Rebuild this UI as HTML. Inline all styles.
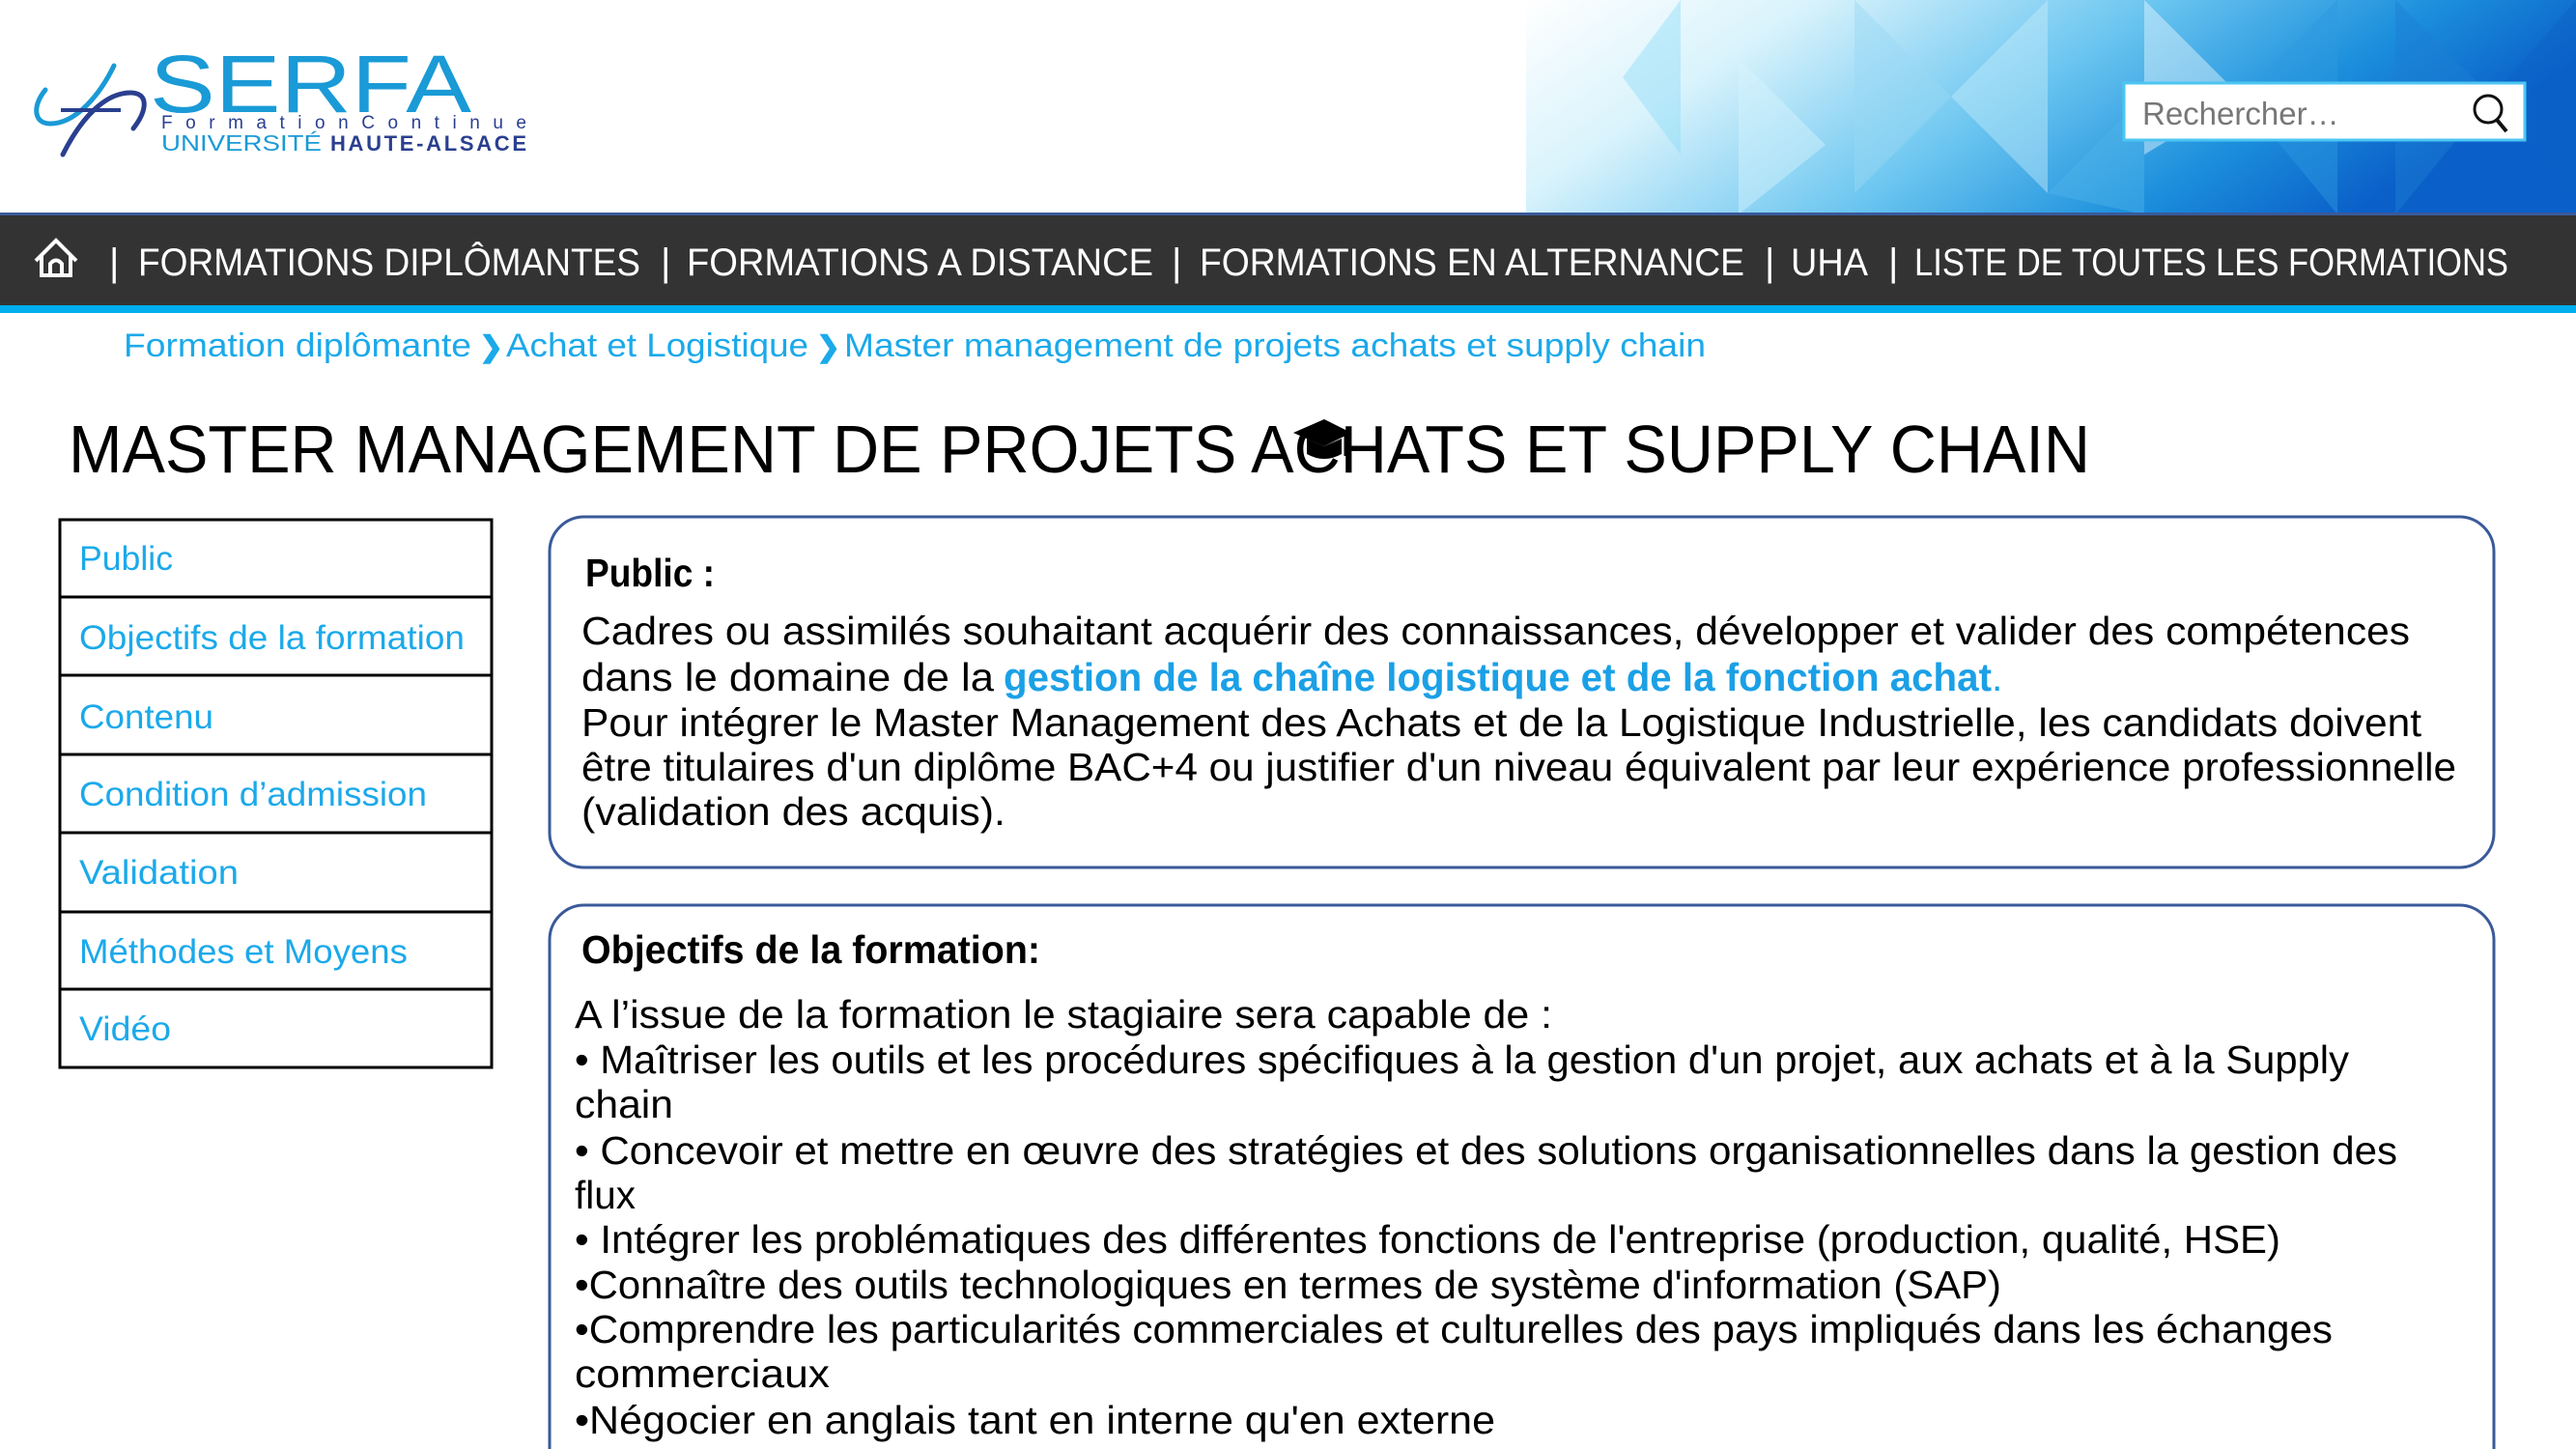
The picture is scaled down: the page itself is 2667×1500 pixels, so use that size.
<!DOCTYPE html>
<html><head><meta charset="utf-8"><style>
html,body{margin:0;padding:0;background:#fff;width:2667px;height:1500px;overflow:hidden}
svg{display:block}
text{font-family:"Liberation Sans",sans-serif}
</style></head><body>
<svg width="2667" height="1500" viewBox="0 0 2667 1500" xmlns="http://www.w3.org/2000/svg">
<defs>
<linearGradient id="hg" x1="0" y1="0" x2="1" y2="0.3">
<stop offset="0" stop-color="#ffffff"/>
<stop offset="0.25" stop-color="#d9f3fc"/>
<stop offset="0.55" stop-color="#6cc6f0"/>
<stop offset="0.8" stop-color="#1c8fdc"/>
<stop offset="1" stop-color="#0a5fc8"/>
</linearGradient>
</defs>
<rect x="1580" y="0" width="1087" height="222" fill="url(#hg)"/>
<g opacity="0.45">
<polygon points="1680,80 1740,0 1740,160" fill="#8fdcf7"/>
<polygon points="1800,60 1890,150 1800,222" fill="#d8f5fd"/>
<polygon points="1920,0 2020,100 1920,200" fill="#9ad9f5"/>
<polygon points="2020,100 2120,0 2120,200" fill="#c5ecfb"/>
<polygon points="2120,200 2220,100 2220,222" fill="#4fb4ea"/>
<polygon points="2220,0 2320,100 2220,160" fill="#e9f8fe"/>
<polygon points="2320,100 2420,0 2420,222" fill="#2e9ae0"/>
<polygon points="2480,0 2580,100 2480,222" fill="#1d7fd5"/>
<polygon points="2580,100 2667,0 2667,222" fill="#0c62c6"/>
</g>
<rect x="2199" y="86" width="415" height="59" fill="#fff" stroke="#4cc6f2" stroke-width="3"/>
<text x="2218" y="129" font-size="33" fill="#777">Rechercher…</text>
<circle cx="2576" cy="113" r="14" fill="none" stroke="#111" stroke-width="3"/>
<line x1="2585" y1="124" x2="2595" y2="136" stroke="#111" stroke-width="4"/>
<path d="M47,93 C33,110 35,128 52,128 C80,128 105,95 118,68" fill="none" stroke="#1a9ad6" stroke-width="5" stroke-linecap="round"/>
<path d="M63,114 L125,114" stroke="#2a3f8f" stroke-width="4"/>
<path d="M65,160 C85,120 110,96 135,96 C155,96 152,115 138,133" fill="none" stroke="#2a3f8f" stroke-width="5" stroke-linecap="round"/>
<text x="155" y="116" font-size="84" fill="#1a9ad6" textLength="333" lengthAdjust="spacingAndGlyphs">SERFA</text>
<text x="167" y="133" font-size="19" fill="#2a3f8f" textLength="378" lengthAdjust="spacing">F o r m a t i o n   C o n t i n u e</text>
<text x="167" y="156" font-size="23" fill="#1a9ad6" textLength="166" lengthAdjust="spacingAndGlyphs">UNIVERSITÉ</text>
<text x="342" y="156" font-size="22" font-weight="bold" fill="#2a3f8f" textLength="203" lengthAdjust="spacing">HAUTE-ALSACE</text>
<rect x="0" y="221" width="2667" height="96" fill="#333"/>
<rect x="0" y="220" width="2667" height="3" fill="#3a5a9a"/>
<rect x="0" y="316" width="2667" height="8" fill="#00aeef"/>
<path d="M37,270 L58,249 L79,270 M43,264 L43,285 L73,285 L73,264 M52,285 L52,273 Q58,266 64,273 L64,285" fill="none" stroke="#fff" stroke-width="4"/>
<g fill="#fff" font-size="40">
<text x="113" y="285">|</text>
<text x="143" y="285" textLength="520" lengthAdjust="spacingAndGlyphs">FORMATIONS DIPLÔMANTES</text>
<text x="684" y="285">|</text>
<text x="711" y="285" textLength="483" lengthAdjust="spacingAndGlyphs">FORMATIONS A DISTANCE</text>
<text x="1213" y="285">|</text>
<text x="1242" y="285" textLength="564" lengthAdjust="spacingAndGlyphs">FORMATIONS EN ALTERNANCE</text>
<text x="1827" y="285">|</text>
<text x="1854" y="285" textLength="80" lengthAdjust="spacingAndGlyphs">UHA</text>
<text x="1955" y="285">|</text>
<text x="1982" y="285" textLength="615" lengthAdjust="spacingAndGlyphs">LISTE DE TOUTES LES FORMATIONS</text>
</g>
<g fill="#1ba9ea" font-size="34">
<text x="128" y="369" textLength="360" lengthAdjust="spacingAndGlyphs">Formation diplômante</text>
<text x="496" y="369" font-weight="bold" font-size="30">❯</text>
<text x="524" y="369" textLength="313" lengthAdjust="spacingAndGlyphs">Achat et Logistique</text>
<text x="845" y="369" font-weight="bold" font-size="30">❯</text>
<text x="874" y="369" textLength="892" lengthAdjust="spacingAndGlyphs">Master management de projets achats et supply chain</text>
</g>
<text x="71" y="489" font-size="70" fill="#000" textLength="2093" lengthAdjust="spacingAndGlyphs">MASTER MANAGEMENT DE PROJETS ACHATS ET SUPPLY CHAIN</text>
<g transform="translate(1369,456)">
<path d="M-30,-8 L2,-22 L30,-8 L2,6 Z" fill="#000"/>
<path d="M-16,-2 L-16,14 Q2,24 20,14 L20,-2 L2,6 Z" fill="#000"/>
<path d="M24,-6 L24,16" stroke="#000" stroke-width="3"/>
</g>
<g fill="none" stroke="#000" stroke-width="3">
<rect x="62" y="538" width="447" height="567"/>
<line x1="62" y1="618" x2="509" y2="618"/>
<line x1="62" y1="699" x2="509" y2="699"/>
<line x1="62" y1="781" x2="509" y2="781"/>
<line x1="62" y1="862" x2="509" y2="862"/>
<line x1="62" y1="944" x2="509" y2="944"/>
<line x1="62" y1="1024" x2="509" y2="1024"/>
</g>
<g fill="#1ba9ea" font-size="35">
<text x="82" y="590" textLength="97" lengthAdjust="spacingAndGlyphs">Public</text>
<text x="82" y="672" textLength="399" lengthAdjust="spacingAndGlyphs">Objectifs de la formation</text>
<text x="82" y="754" textLength="139" lengthAdjust="spacingAndGlyphs">Contenu</text>
<text x="82" y="834" textLength="360" lengthAdjust="spacingAndGlyphs">Condition d’admission</text>
<text x="82" y="915" textLength="165" lengthAdjust="spacingAndGlyphs">Validation</text>
<text x="82" y="997" textLength="340" lengthAdjust="spacingAndGlyphs">Méthodes et Moyens</text>
<text x="82" y="1077" textLength="95" lengthAdjust="spacingAndGlyphs">Vidéo</text>
</g>
<rect x="569" y="535" width="2013" height="363" rx="36" fill="none" stroke="#3a5a9a" stroke-width="3"/>
<g font-size="41" fill="#000">
<text x="606" y="607" font-weight="bold" textLength="134" lengthAdjust="spacingAndGlyphs">Public :</text>
<text x="602" y="667" textLength="1893" lengthAdjust="spacingAndGlyphs">Cadres ou assimilés souhaitant acquérir des connaissances, développer et valider des compétences</text>
<text x="602" y="715" textLength="427" lengthAdjust="spacingAndGlyphs">dans le domaine de la</text>
<text x="1039" y="715" font-weight="bold" fill="#1ba0e6" textLength="1023" lengthAdjust="spacingAndGlyphs">gestion de la chaîne logistique et de la fonction achat</text>
<text x="2062" y="715" fill="#1ba0e6">.</text>
<text x="602" y="762" textLength="1905" lengthAdjust="spacingAndGlyphs">Pour intégrer le Master Management des Achats et de la Logistique Industrielle, les candidats doivent</text>
<text x="602" y="808" textLength="1941" lengthAdjust="spacingAndGlyphs">être titulaires d'un diplôme BAC+4 ou justifier d'un niveau équivalent par leur expérience professionnelle</text>
<text x="602" y="854" textLength="439" lengthAdjust="spacingAndGlyphs">(validation des acquis).</text>
</g>
<rect x="569" y="937" width="2013" height="620" rx="36" fill="none" stroke="#3a5a9a" stroke-width="3"/>
<g font-size="41" fill="#000">
<text x="602" y="997" font-weight="bold" textLength="475" lengthAdjust="spacingAndGlyphs">Objectifs de la formation:</text>
<text x="595" y="1064" textLength="1012" lengthAdjust="spacingAndGlyphs">A l’issue de la formation le stagiaire sera capable de :</text>
<text x="595" y="1111" textLength="1837" lengthAdjust="spacingAndGlyphs">• Maîtriser les outils et les procédures spécifiques à la gestion d'un projet, aux achats et à la Supply</text>
<text x="595" y="1157" textLength="102" lengthAdjust="spacingAndGlyphs">chain</text>
<text x="595" y="1205" textLength="1887" lengthAdjust="spacingAndGlyphs">• Concevoir et mettre en œuvre des stratégies et des solutions organisationnelles dans la gestion des</text>
<text x="595" y="1251" textLength="63" lengthAdjust="spacingAndGlyphs">flux</text>
<text x="595" y="1297" textLength="1766" lengthAdjust="spacingAndGlyphs">• Intégrer les problématiques des différentes fonctions de l'entreprise (production, qualité, HSE)</text>
<text x="595" y="1344" textLength="1477" lengthAdjust="spacingAndGlyphs">•Connaître des outils technologiques en termes de système d'information (SAP)</text>
<text x="595" y="1390" textLength="1820" lengthAdjust="spacingAndGlyphs">•Comprendre les particularités commerciales et culturelles des pays impliqués dans les échanges</text>
<text x="595" y="1436" textLength="264" lengthAdjust="spacingAndGlyphs">commerciaux</text>
<text x="595" y="1484" textLength="953" lengthAdjust="spacingAndGlyphs">•Négocier en anglais tant en interne qu'en externe</text>
</g>
</svg>
</body></html>
